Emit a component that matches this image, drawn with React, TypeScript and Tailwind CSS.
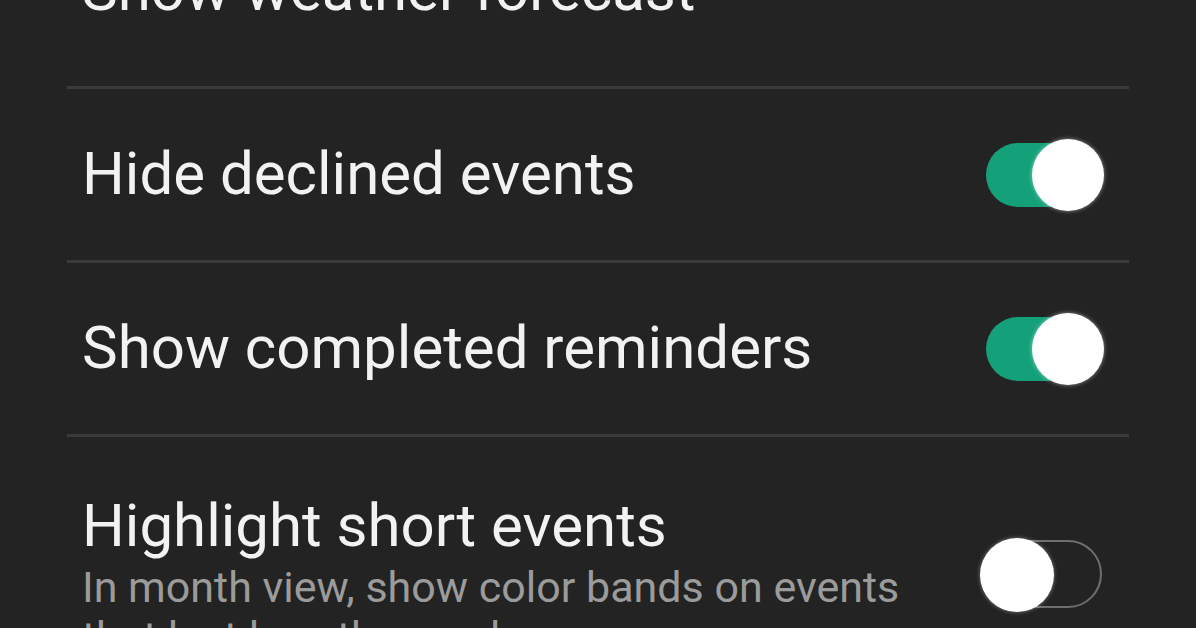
import React from 'react';

const Toggle = ({ on }: { on: boolean }) =>
  on ? (
    <div className="relative w-[116px] h-[64px] rounded-full bg-[#14a17a]">
      <div className="absolute right-[-2px] top-[-4px] w-[72px] h-[72px] rounded-full bg-white shadow-[0_0_4px_rgba(255,255,255,0.5)]" />
    </div>
  ) : (
    <div className="relative w-[120px] h-[68px] rounded-full border-2 border-[#6f6f6f]">
      <div className="absolute left-[-4px] top-[-4px] w-[74px] h-[74px] rounded-full bg-white shadow-[0_0_4px_rgba(255,255,255,0.4)]" />
    </div>
  );

const Row = ({ title, on, lift }: { title: string; on?: boolean; lift?: boolean }) => (
  <div className="flex items-center justify-between h-[174px] pl-[15px] pr-[27px] border-b-[3px] border-[#3a3a3a]">
    <span className={`text-[60px] leading-[72px] text-[#f2f2f2] ${lift ? 'mt-[-22px]' : 'mt-[-2px]'}`}>{title}</span>
    {on !== undefined && <Toggle on={on} />}
  </div>
);

export default function App() {
  return (
    <div className="w-[1196px] h-[628px] overflow-hidden bg-[#232323]" style={{ fontFamily: 'Roboto, "Liberation Sans", sans-serif' }}>
      <div className="mx-[67px] mt-[-85px]">
        <Row title="Show weather forecast" lift />
        <Row title="Hide declined events" on />
        <Row title="Show completed reminders" on />
        <div className="flex items-start justify-between pt-[53px] pl-[15px] pr-[27px]">
          <div className="flex flex-col">
            <span className="text-[60px] leading-[72px] text-[#f2f2f2]">Highlight short events</span>
            <span className="text-[43px] leading-[50px] text-[#9b9b9b] w-[860px]">In month view, show color bands on events that last less than an hour</span>
          </div>
          <div className="mt-[50px]">
            <Toggle on={false} />
          </div>
        </div>
      </div>
    </div>
  );
}
